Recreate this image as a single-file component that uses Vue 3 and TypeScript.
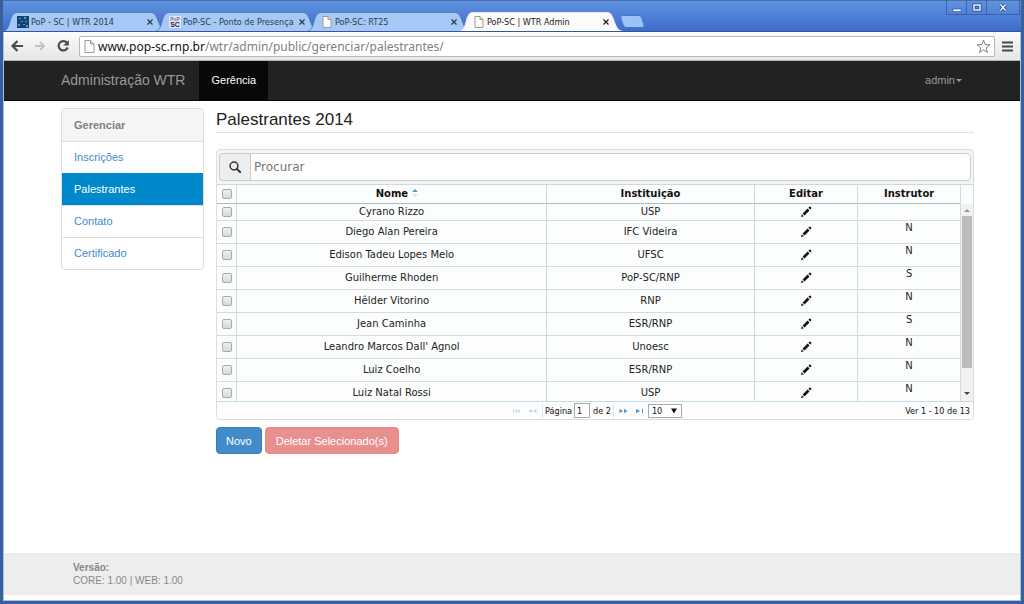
<script setup lang="ts">
import { ref } from 'vue'

interface Tab {
  title: string
  icon: 'grid' | 'pop' | 'page'
  active?: boolean
}

interface Speaker {
  name: string
  institution: string
  instructor: string
}

const tabs: Tab[] = [
  { title: 'PoP - SC | WTR 2014', icon: 'grid' },
  { title: 'PoP-SC - Ponto de Presença', icon: 'pop' },
  { title: 'PoP-SC: RT25', icon: 'page' },
  { title: 'PoP-SC | WTR Admin', icon: 'page', active: true },
]

const menu = ['Inscrições', 'Palestrantes', 'Contato', 'Certificado']
const current = ref('Palestrantes')

const speakers: Speaker[] = [
  { name: 'Cyrano Rizzo', institution: 'USP', instructor: '' },
  { name: 'Diego Alan Pereira', institution: 'IFC Videira', instructor: 'N' },
  { name: 'Edison Tadeu Lopes Melo', institution: 'UFSC', instructor: 'N' },
  { name: 'Guilherme Rhoden', institution: 'PoP-SC/RNP', instructor: 'S' },
  { name: 'Hêlder Vitorino', institution: 'RNP', instructor: 'N' },
  { name: 'Jean Caminha', institution: 'ESR/RNP', instructor: 'S' },
  { name: "Leandro Marcos Dall' Agnol", institution: 'Unoesc', instructor: 'N' },
  { name: 'Luiz Coelho', institution: 'ESR/RNP', instructor: 'N' },
  { name: 'Luiz Natal Rossi', institution: 'USP', instructor: 'N' },
]

const search = ref('')
const page = ref('1')
const perPage = ref('10')
</script>

<template>
  <div class="window">
    <header class="titlebar">
      <div class="tabs">
        <div v-for="tab in tabs" :key="tab.title" class="tab" :class="{ active: tab.active }">
          <svg class="tab-shape" viewBox="0 0 162 19" preserveAspectRatio="none" aria-hidden="true">
            <path d="M0 19 C4 18 5 14 7 6 Q9 0.5 12 0.5 H148 Q151 0.5 153 6 C156 14 157 18 162 19" />
          </svg>
          <svg v-if="tab.icon === 'grid'" class="favicon" viewBox="0 0 12 12" aria-hidden="true">
            <rect width="12" height="12" fill="#12426f" />
            <path d="M2 2h2v1H2zM7 1h2v2H7zM4 5h2v1H4zM8 5h2v1H8zM1 8h2v2H1zM6 8h2v1H6zM9 9h2v2H9z" fill="#4f9bd0" />
          </svg>
          <svg v-else-if="tab.icon === 'pop'" class="favicon" viewBox="0 0 12 12" aria-hidden="true">
            <rect width="12" height="12" fill="#e4e6f5" />
            <text x="6" y="5" text-anchor="middle" class="pop-top">PoP</text>
            <text x="6" y="11" text-anchor="middle" class="pop-bottom">SC</text>
          </svg>
          <svg v-else class="favicon" viewBox="0 0 12 12" aria-hidden="true">
            <path d="M2 .5h5l3 3v8H2z" fill="#fdfdfb" stroke="#9a9a94" />
            <path d="M7 .5v3h3" fill="none" stroke="#9a9a94" />
          </svg>
          <span class="tab-title">{{ tab.title }}</span>
          <button class="tab-close" type="button" aria-label="Fechar guia">
            <svg viewBox="0 0 6 6" aria-hidden="true"><path d="M.5 .5l5 5M5.500 .5l-5 5" stroke="currentColor" stroke-width="1.300" /></svg>
          </button>
        </div>
        <button class="new-tab" type="button" aria-label="Nova guia">
          <svg viewBox="0 0 25 13" aria-hidden="true">
            <path d="M2 .5h17q2 0 3 3l2 7q.5 2-2 2H6q-2 0-3-3L.8 3Q.3.500 2 .5z" fill="#9dc2f5" stroke="#4a78c8" />
          </svg>
        </button>
      </div>
      <div class="window-controls">
        <button type="button" aria-label="Minimizar">
          <svg viewBox="0 0 10 10" aria-hidden="true"><rect x="1" y="6" width="8" height="2.500" fill="#eef4ff" stroke="#22407c" stroke-width=".5" /></svg>
        </button>
        <button type="button" aria-label="Maximizar">
          <svg viewBox="0 0 10 10" aria-hidden="true">
            <path d="M2 2h6v5H2z" fill="none" stroke="#22407c" stroke-width="3" />
            <path d="M2 2h6v5H2z" fill="none" stroke="#eef4ff" stroke-width="1.500" />
          </svg>
        </button>
        <button class="wide" type="button" aria-label="Fechar">
          <svg viewBox="0 0 10 10" aria-hidden="true">
            <path d="M2.500 1.500l5 6M7.500 1.500l-5 6" stroke="#22407c" stroke-width="3" />
            <path d="M2.500 1.500l5 6M7.500 1.500l-5 6" stroke="#eef4ff" stroke-width="1.500" />
          </svg>
        </button>
      </div>
    </header>

    <div class="toolbar">
      <button class="tool" type="button" aria-label="Voltar">
        <svg viewBox="0 0 14 14" aria-hidden="true"><path d="M13 7H3M7.500 2L2.500 7l5 5" fill="none" stroke="#4c4c4c" stroke-width="2.200" /></svg>
      </button>
      <button class="tool" type="button" aria-label="Avançar">
        <svg viewBox="0 0 14 14" aria-hidden="true"><path d="M2 7h9M7 3l4 4-4 4" fill="none" stroke="#c4c4c4" stroke-width="2" /></svg>
      </button>
      <button class="tool" type="button" aria-label="Recarregar">
        <svg viewBox="0 0 14 14" aria-hidden="true">
          <path d="M11 3.800A4.700 4.700 0 1 0 11.700 8.500" fill="none" stroke="#4c4c4c" stroke-width="2.200" />
          <path d="M12.800 1v5.500H7.300z" fill="#4c4c4c" />
        </svg>
      </button>
      <div class="address">
        <svg class="page-icon" viewBox="0 0 11 13" aria-hidden="true">
          <path d="M1 .5h5.500l3.500 3.500v8.500H1z" fill="#fff" stroke="#999" />
          <path d="M6.500 .5V4H10" fill="none" stroke="#999" />
        </svg>
        <div class="url" role="textbox" aria-label="Endereço" contenteditable="true" spellcheck="false"><span class="host">www.pop-sc.rnp.br</span>/wtr/admin/public/gerenciar/palestrantes/</div>
        <button class="star" type="button" aria-label="Favorito">
          <svg viewBox="0 0 16 16" aria-hidden="true">
            <path d="M8 1.200l1.800 4.700 5 .3-3.900 3.200 1.300 4.900L8 11.500l-4.200 2.800 1.300-4.900L1.200 6.200l5-.3z" fill="#fff" stroke="#777" stroke-linejoin="round" />
          </svg>
        </button>
      </div>
      <button class="menu-button" type="button" aria-label="Menu">
        <svg viewBox="0 0 11 11" aria-hidden="true"><path d="M0 1.500h11M0 5.500h11M0 9.500h11" stroke="#484848" stroke-width="2" /></svg>
      </button>
    </div>

    <nav class="navbar">
      <a class="brand" href="#">Administração WTR</a>
      <a class="nav-link" href="#">Gerência</a>
      <a class="user" href="#">admin<span class="caret"></span></a>
    </nav>

    <main class="content">
      <aside class="sidebar">
        <h2 class="sidebar-title">Gerenciar</h2>
        <a
          v-for="item in menu"
          :key="item"
          href="#"
          class="sidebar-link"
          :class="{ selected: item === current }"
          @click.prevent="current = item"
        >{{ item }}</a>
      </aside>

      <section class="main">
        <h1>Palestrantes 2014</h1>
        <div class="panel">
          <div class="search">
            <label class="search-icon" for="search" aria-label="Procurar">
              <svg viewBox="0 0 12 12" aria-hidden="true">
                <circle cx="5" cy="5" r="3.900" fill="none" stroke="#333" stroke-width="1.500" />
                <path d="M7.900 7.900l3.300 3.300" stroke="#333" stroke-width="2" stroke-linecap="round" />
              </svg>
            </label>
            <input id="search" v-model="search" type="text" placeholder="Procurar" />
          </div>

          <div class="grid">
            <table>
              <colgroup><col class="c-check" /><col class="c-name" /><col class="c-inst" /><col class="c-edit" /><col /></colgroup>
              <thead>
                <tr>
                  <th><input type="checkbox" aria-label="Selecionar todos" /></th>
                  <th class="sorted">Nome
                    <svg class="sort" viewBox="0 0 6 8" aria-hidden="true">
                      <path d="M3 0l3 3H0z" fill="#4e9bcb" /><path d="M0 5h6L3 8z" fill="#d3e6f2" />
                    </svg>
                  </th>
                  <th>Instituição</th>
                  <th>Editar</th>
                  <th>Instrutor</th>
                </tr>
              </thead>
              <tbody>
                <tr v-for="s in speakers" :key="s.name">
                  <td><input type="checkbox" :aria-label="'Selecionar ' + s.name" /></td>
                  <td>{{ s.name }}</td>
                  <td>{{ s.institution }}</td>
                  <td>
                    <button class="edit" type="button" :aria-label="'Editar ' + s.name">
                      <svg viewBox="0 0 12 12" aria-hidden="true">
                        <path d="M1 11l.8-2.800 2 2zM2.600 7.500l5-5 1.900 1.900-5 5zM8.400 1.800l1-1q.5-.4 1 0l.8.8q.4.500 0 1l-1 1z" fill="#111" />
                      </svg>
                    </button>
                  </td>
                  <td class="instructor">{{ s.instructor }}</td>
                </tr>
              </tbody>
            </table>
            <div class="scrollbar" aria-hidden="true">
              <span class="arrow up"></span>
              <span class="thumb"></span>
              <span class="arrow down"></span>
            </div>
          </div>

          <div class="pager">
            <div class="pager-controls">
              <button class="step off" type="button" aria-label="Primeira página" disabled>
                <svg viewBox="0 0 9 6" aria-hidden="true"><path d="M1 1h1v4H1zM5 1v4L2.500 3zM8 1v4L5.500 3z" fill="currentColor" /></svg>
              </button>
              <button class="step off" type="button" aria-label="Página anterior" disabled>
                <svg viewBox="0 0 9 6" aria-hidden="true"><path d="M4 .8v4.400L.5 3zM8.500 .8v4.400L5 3z" fill="currentColor" /></svg>
              </button>
              <span class="divider"></span>
              <label for="page">Página</label>
              <input id="page" v-model="page" type="text" />
              <span class="total">de 2</span>
              <span class="divider"></span>
              <button class="step" type="button" aria-label="Próxima página">
                <svg viewBox="0 0 9 6" aria-hidden="true"><path d="M.5 .8v4.400L4 3zM5 .8v4.400L8.500 3z" fill="currentColor" /></svg>
              </button>
              <button class="step" type="button" aria-label="Última página">
                <svg viewBox="0 0 9 6" aria-hidden="true"><path d="M1 .8v4.400L5 3zM7 .8h1v4.400H7z" fill="currentColor" /></svg>
              </button>
              <span class="select-wrap">
                <select v-model="perPage" aria-label="Registros por página">
                  <option>10</option>
                  <option>20</option>
                  <option>30</option>
                </select>
                <svg class="select-arrow" viewBox="0 0 6 6" aria-hidden="true"><path d="M0 .5h6L3 5.500z" fill="#111" /></svg>
              </span>
            </div>
            <span class="range">Ver 1 - 10 de 13</span>
          </div>
        </div>

        <div class="actions">
          <button class="btn primary" type="button">Novo</button>
          <button class="btn danger" type="button">Deletar Selecionado(s)</button>
        </div>
      </section>
    </main>

    <footer class="footer">
      <strong>Versão:</strong>
      <span>CORE: 1.00 | WEB: 1.00</span>
    </footer>
  </div>
</template>

<style>
body {
  margin: 0;
}
</style>

<style scoped>
* {
  box-sizing: border-box;
}

.window {
  min-height: 100vh;
  display: flex;
  flex-direction: column;
  padding: 0 1px 1px;
  border: solid #3a609c;
  border-width: 0 3px 3px;
  background: #a9c1ea;
  font-family: "Liberation Sans", Arial, sans-serif;
  font-size: 11px;
  color: #333;
}

button {
  border: 0;
  padding: 0;
  background: none;
  font: inherit;
  color: inherit;
}

svg {
  display: block;
}

a {
  text-decoration: none;
}

.titlebar {
  height: 32px;
  display: flex;
  justify-content: space-between;
  align-items: flex-start;
  margin: 0 -1px;
  padding: 0 1px;
  border-top: 1px solid #4a6ea6;
  border-bottom: 1px solid #35549a;
  background: linear-gradient(#5f93e0, #3f6bcb);
}

.tabs {
  display: flex;
  align-self: flex-end;
  align-items: center;
}

.tab {
  position: relative;
  width: 162px;
  height: 19px;
  margin-right: -10px;
  padding: 0 10px 0 13px;
  display: flex;
  align-items: center;
  font-family: "DejaVu Sans Condensed", "DejaVu Sans", sans-serif;
  font-size: 9px;
  color: #2c3c55;
}

.tab-shape {
  position: absolute;
  inset: 0;
  width: 100%;
  height: 100%;
  fill: #a5c8f6;
  stroke: #587fb9;
}

.tab.active {
  z-index: 1;
  color: #222;
}

.tab.active .tab-shape {
  fill: #fbfbfb;
  stroke: #dfe8f5;
}

.favicon {
  position: relative;
  flex: none;
  width: 12px;
  height: 12px;
}

.pop-top {
  font: bold 5px "Liberation Sans", sans-serif;
  fill: #7a6fb0;
}

.pop-bottom {
  font: bold 7px "Liberation Sans", sans-serif;
  fill: #1c1c50;
}

.tab-title {
  position: relative;
  flex: 1;
  margin-left: 2px;
  white-space: nowrap;
}

.tab-close {
  position: relative;
  flex: none;
  width: 12px;
  height: 12px;
  display: grid;
  place-items: center;
}

.tab-close svg {
  width: 6px;
  height: 6px;
}

.new-tab svg {
  width: 25px;
  height: 13px;
}

.new-tab {
  margin-left: 8px;
}

.window-controls {
  display: flex;
  border: 1px solid #3d62a8;
  border-top: 0;
}

.window-controls button {
  width: 20px;
  height: 13px;
  display: grid;
  place-items: center;
  border-right: 1px solid #3d62a8;
}

.window-controls .wide {
  width: 32px;
  border-right: 0;
}

.window-controls svg {
  width: 10px;
  height: 10px;
}

.toolbar {
  height: 29px;
  display: flex;
  align-items: center;
  padding: 0 7px 0 6px;
  background: linear-gradient(#fbfbfb, #e6e6e6);
  border-bottom: 1px solid #b5b5b5;
}

.tool {
  width: 23px;
  display: flex;
}

.tool svg {
  width: 14px;
  height: 14px;
}

.address {
  flex: 1;
  height: 21px;
  display: flex;
  align-items: center;
  padding: 0 3px 0 4px;
  border: 1px solid #b8b8b8;
  border-radius: 2px;
  background: #fff;
}

.page-icon {
  width: 11px;
  height: 13px;
}

.url {
  flex: 1;
  margin-left: 3px;
  font-family: "Noto Sans", "DejaVu Sans", sans-serif;
  font-size: 12px;
  line-height: 19px;
  white-space: nowrap;
  color: #808080;
  outline: 0;
}

.host {
  color: #111;
}

.star svg {
  width: 15px;
  height: 15px;
}

.menu-button {
  margin: 0 0 0 7px;
}

.menu-button svg {
  width: 11px;
  height: 11px;
}

.navbar {
  height: 40px;
  display: flex;
  align-items: stretch;
  padding: 0 58px 0 57px;
  border-bottom: 1px solid #080808;
  background: #222;
  color: #999;
  line-height: 39px;
}

.navbar a {
  color: #999;
}

.navbar .brand {
  font-size: 14px;
  padding-right: 14px;
}

.navbar .nav-link {
  padding: 0 12px;
  background: #080808;
  color: #fff;
}

.navbar .user {
  margin-left: auto;
  display: flex;
  align-items: center;
}

.caret {
  margin-left: 1px;
  border: solid transparent;
  border-width: 3px 3px 0;
  border-top-color: #999;
}

.content {
  flex: 1;
  display: flex;
  align-items: flex-start;
  gap: 12px;
  padding: 7px 46px 16px 57px;
  background: #fff;
}

.sidebar {
  flex: none;
  width: 143px;
  border: 1px solid #ddd;
  border-radius: 4px;
  overflow: hidden;
}

.sidebar-title {
  margin: 0;
  padding: 0 12px;
  font-size: 11px;
  line-height: 32px;
  color: #808080;
  background: #f5f5f5;
}

.sidebar-link {
  display: block;
  padding: 0 12px;
  line-height: 31px;
  border-top: 1px solid #ddd;
  color: #428bca;
}

.sidebar-link.selected {
  background: #08c;
  border-color: #08c;
  color: #fff;
}

.main {
  flex: 1;
  min-width: 0;
}

h1 {
  margin: 0 0 16px;
  font-size: 17px;
  font-weight: 400;
  line-height: 24px;
  border-bottom: 1px solid #e4e4e4;
  color: #222;
}

.panel {
  border: 1px solid #ddd;
  border-radius: 4px;
  background: #f5f5f5;
  font-family: "DejaVu Sans", Verdana, sans-serif;
  font-size: 10px;
  overflow: hidden;
}

.search {
  display: flex;
  height: 34px;
  padding: 3px 2px;
}

.search-icon {
  flex: none;
  width: 31px;
  display: grid;
  place-items: center;
  border: 1px solid #ccc;
  border-right: 0;
  border-radius: 4px 0 0 4px;
  background: #eee;
}

.search-icon svg {
  width: 12px;
  height: 12px;
}

.search input {
  flex: 1;
  min-width: 0;
  padding: 0 3px;
  border: 1px solid #ccc;
  border-radius: 0 4px 4px 0;
  background: #fff;
  font: 12px "DejaVu Sans", Verdana, sans-serif;
  color: #333;
  outline: 0;
}

.search input::placeholder {
  color: #777;
  opacity: 1;
}

.grid {
  display: flex;
  height: 217px;
  overflow: hidden;
  border-top: 1px solid #c5dbec;
  background: #fcfefe;
}

table {
  flex: 1;
  align-self: flex-start;
  table-layout: fixed;
  border-collapse: separate;
  border-spacing: 0;
  color: #222;
}

.c-check {
  width: 20px;
}

.c-name {
  width: 41.7%;
}

.c-inst {
  width: 27.9%;
}

.c-edit {
  width: 13.9%;
}

th,
td {
  height: 23px;
  padding: 0;
  text-align: center;
  line-height: 14px;
  border-right: 1px solid #ccdde6;
  border-bottom: 1px solid #d6dcde;
}

th {
  height: 19px;
  color: #111;
  border-bottom-color: #a9bfca;
}

.sorted {
  padding-left: 10px;
}

tbody tr:first-child td {
  height: 17px;
}

tbody .instructor {
  padding-bottom: 8px;
}

.sort {
  display: inline-block;
  width: 6px;
  height: 8px;
}

input[type="checkbox"] {
  appearance: none;
  display: block;
  width: 10px;
  height: 10px;
  margin: 0 auto;
  border: 1px solid #aaa;
  border-radius: 2px;
  background: linear-gradient(#f0f0f0, #d9d9d9);
}

.edit {
  display: block;
  margin: 0 auto;
}

.edit svg {
  width: 12px;
  height: 12px;
}

.scrollbar {
  width: 12px;
  flex: none;
  display: flex;
  flex-direction: column;
  align-items: center;
  margin-top: 19px;
  background: #f1f1f1;
}

.arrow {
  border: solid transparent;
  border-width: 0 3px;
}

.arrow.up {
  margin: 5px 0 4px;
  border-bottom: 3px solid #999;
}

.arrow.down {
  margin: auto 0 6px;
  border-top: 3px solid #444;
}

.thumb {
  width: 10px;
  height: 152px;
  background: #bcbcbc;
}

.pager {
  position: relative;
  display: flex;
  justify-content: center;
  align-items: center;
  height: 18px;
  border-top: 1px solid #c5dbec;
  background: #fdfdfe;
  font-family: "DejaVu Sans Condensed", "DejaVu Sans", sans-serif;
  font-size: 9px;
  color: #111;
}

.pager-controls {
  display: flex;
  align-items: center;
}

.step {
  width: 16px;
  display: flex;
  justify-content: center;
  color: #4e9bcb;
}

.step.off {
  color: #bcdcf0;
}

.step svg {
  width: 9px;
  height: 6px;
}

.divider {
  width: 1px;
  height: 14px;
  margin: 0 2px;
  background: #dde5ea;
}

#page {
  width: 16px;
  height: 15px;
  margin: 0 3px 0 2px;
  padding: 0 2px;
  border: 1px solid #aaa;
  background: #fff;
  font: inherit;
  color: inherit;
}

.select-wrap {
  position: relative;
}

select {
  appearance: none;
  display: block;
  width: 34px;
  height: 14px;
  padding: 0 3px;
  border: 1px solid #aaa;
  border-radius: 0;
  background: #fff;
  font: inherit;
  color: inherit;
}

.select-arrow {
  position: absolute;
  top: 4px;
  right: 5px;
  width: 6px;
  height: 6px;
  pointer-events: none;
}

.range {
  position: absolute;
  right: 3px;
}

.actions {
  display: flex;
  gap: 3px;
  margin-top: 7px;
}

.btn {
  height: 27px;
  padding: 0 9px;
  border: 1px solid #357ebd;
  border-radius: 4px;
  background: #428bca;
  color: #fff;
}

.btn.danger {
  padding: 0 10px;
  border-color: #e58987;
  background: #e8908e;
}

.footer {
  display: flex;
  flex-direction: column;
  padding: 8px 69px;
  border-bottom: 5px solid #fff;
  background: #ededed;
  font-size: 10px;
  line-height: 13px;
  color: #888;
}
</style>
